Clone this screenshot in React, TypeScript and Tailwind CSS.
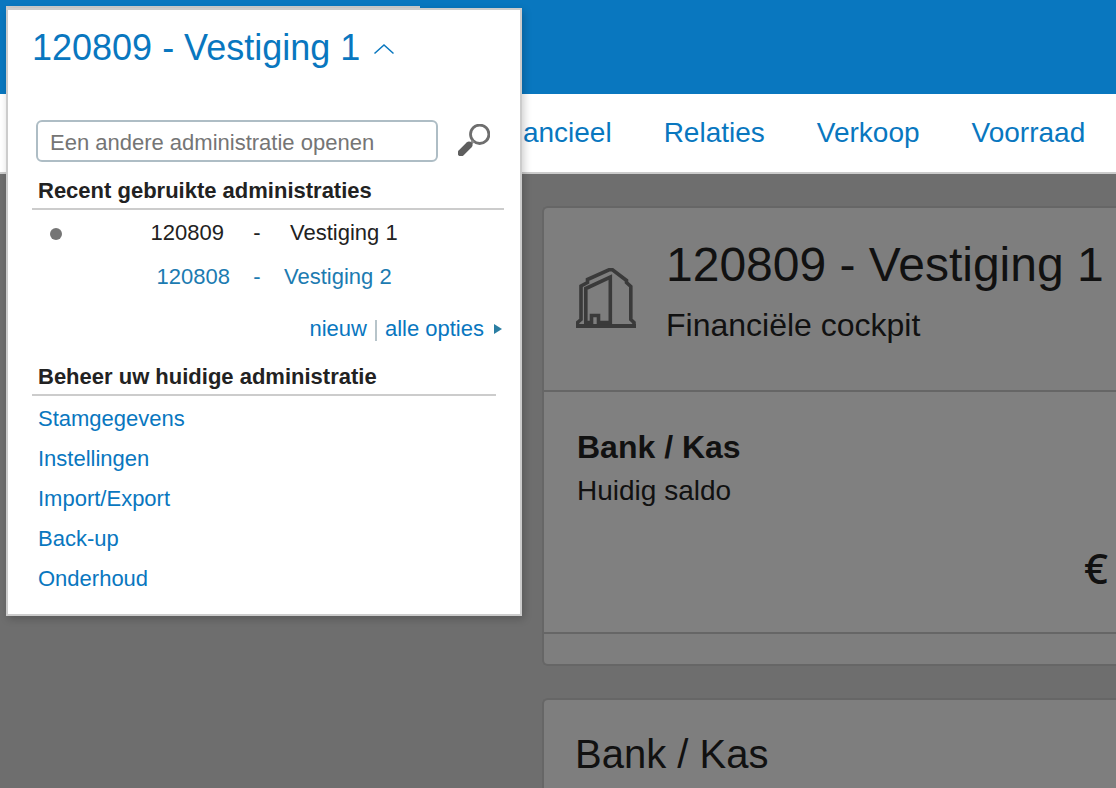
import { useState } from "react";

const navItems = ["Financieel", "Relaties", "Verkoop", "Voorraad"];

const manageLinks = ["Stamgegevens", "Instellingen", "Import/Export", "Back-up", "Onderhoud"];

function BuildingIcon() {
  return (
    <svg width="60" height="60" viewBox="0 0 60 60" fill="none" stroke="#3a3a3a" strokeWidth="3.6" className="mt-[35px] shrink-0" aria-hidden="true">
      <path d="M0 58H60" strokeWidth="4" />
      <path d="M1.5 57V54.5L5 51.5V18L11.5 14.5V11.500L33 1.800H36.500L50.500 12.500V14.500L54.800 18.500V51.500L58 54.500V57" />
      <path d="M9.800 54.500V20.500L34.300 9V54.500H22.500V47.500H15.500V54.500Z" />
    </svg>
  );
}

function SearchIcon() {
  return (
    <svg width="32" height="32" viewBox="0 0 32 32" fill="none" aria-hidden="true">
      <circle cx="21.700" cy="10.300" r="9.200" stroke="#6e6e6e" strokeWidth="2.800" />
      <path d="M15.500 17L12.500 20" stroke="#8a8a8a" strokeWidth="3" />
      <path d="M11 21L3 29" stroke="#5e5e5e" strokeWidth="6.800" strokeLinecap="round" />
    </svg>
  );
}

function AdministrationPopup() {
  const [query, setQuery] = useState("");

  return (
    <div className="absolute left-1.5 top-1.5 w-[516px] text-[22px] leading-[28px]">
      <div className="h-0.5 w-[414px] bg-[#cccccc]" />
      <section className="border-2 border-[#cccccc] bg-white pb-[15px] pl-6 pr-4 shadow-[2px_3px_8px_rgba(0,0,0,0.2)]">
        <button type="button" className="mt-4 flex items-center gap-[13px] text-[36px] leading-[44px] text-[#0977bf]">
          120809 - Vestiging 1
          <svg width="22" height="12" viewBox="0 0 22 12" fill="none" stroke="#0977bf" strokeWidth="1.5" className="mt-0.5" aria-hidden="true">
            <path d="M1.500 10.500L11 2L20.500 10.500" />
          </svg>
        </button>

        <div className="mt-[50px] flex items-center gap-5 pl-1">
          <input
            type="text"
            aria-label="Een andere administratie openen"
            placeholder="Een andere administratie openen"
            value={query}
            onChange={(e) => setQuery(e.target.value)}
            className="h-[42px] w-[402px] rounded-md border-2 border-[#aebdc5] bg-white px-3 pt-1 placeholder:text-[#757575]"
          />
          <button type="button" aria-label="Zoeken" className="pb-0.5"><SearchIcon /></button>
        </div>

        <h2 className="mt-[15px] border-b-2 border-[#cccccc] pb-[3px] pl-1.5 font-bold">Recent gebruikte administraties</h2>
        <table className="mt-px w-full table-fixed">
          <tbody>
            <tr className="h-11">
              <td className="w-[198px] pr-1.5">
                <div className="flex items-center justify-between pl-[18px]">
                  <span className="mt-0.5 h-3 w-3 rounded-full bg-[#757575]" />
                  120809
                </div>
              </td>
              <td className="w-[54px] text-center">-</td>
              <td className="pl-[6px]">Vestiging 1</td>
            </tr>
            <tr className="h-11 text-[#1c7bb1]">
              <td className="text-right"><a href="#120808">120808</a></td>
              <td className="text-center">-</td>
              <td><a href="#120808">Vestiging 2</a></td>
            </tr>
          </tbody>
        </table>

        <div className="mt-4 flex items-center justify-end pr-0.5 text-[#0977bf]">
          <a href="#nieuw">nieuw</a>
          <span className="mx-2 mt-0.5 h-[21px] w-0.5 bg-[#b7c4ca]" />
          <a href="#opties" className="flex items-center gap-[10px]">
            alle opties
            <svg width="8" height="10" viewBox="0 0 8 10" aria-hidden="true">
              <path d="M0 0L8 5L0 10Z" fill="#2a7ea3" />
            </svg>
          </a>
        </div>

        <h2 className="mr-2 mt-5 border-b-2 border-[#cccccc] pb-[3px] pl-1.5 font-bold">Beheer uw huidige administratie</h2>
        <ul className="mt-[3px] pl-1.5 leading-[40px] text-[#0977bf]">
          {manageLinks.map((label) => (
            <li key={label}><a href={`#${label}`}>{label}</a></li>
          ))}
        </ul>
      </section>
    </div>
  );
}

export default function App() {
  return (
    <div className="relative flex h-screen flex-col overflow-hidden bg-[#6e6e6e] font-['Liberation_Sans',Arial,sans-serif] text-[#222222]">
      <header className="h-[94px] shrink-0 bg-[#0977bf]" />
      <nav className="flex h-20 shrink-0 items-center gap-[52px] border-b-2 border-[#cccccc] bg-white pl-[484px] text-[28px] leading-[36px] text-[#0977bf]">
        {navItems.map((item) => (
          <a key={item} href={`#${item}`}>{item}</a>
        ))}
      </nav>

      <main className="flex flex-1 flex-col gap-8 pl-[542px] pt-8 text-[#111111]">
        <section className="rounded-l-md border-2 border-r-0 border-[#666666] bg-[#7e7e7e]">
          <div className="flex items-start gap-[30px] whitespace-nowrap border-b-2 border-[#666666] pb-[45px] pl-8 pt-[25px]">
            <BuildingIcon />
            <div>
              <h1 className="text-[48px] leading-[64px]">120809 - Vestiging 1</h1>
              <p className="mt-2 text-[32px] leading-[40px]">Financiële cockpit</p>
            </div>
          </div>
          <div className="border-b-2 border-[#666666] bg-[#808080] pb-9 pl-[33px] pt-[35px]">
            <h2 className="text-[32px] font-bold leading-[40px]">Bank / Kas</h2>
            <p className="mt-1.5 text-[28px] leading-[36px]">Huidig saldo</p>
            <p className="mt-[31px] pr-2 text-right font-['Noto_Sans',sans-serif] text-[42px] font-medium leading-[56px]">€</p>
          </div>
          <div className="h-[30px]" />
        </section>

        <section className="flex-1 rounded-tl-md border-l-2 border-t-2 border-[#666666] bg-[#7e7e7e] pl-[31px] pt-7">
          <h2 className="text-[40px] leading-[52px]">Bank / Kas</h2>
        </section>
      </main>

      <AdministrationPopup />
    </div>
  );
}
